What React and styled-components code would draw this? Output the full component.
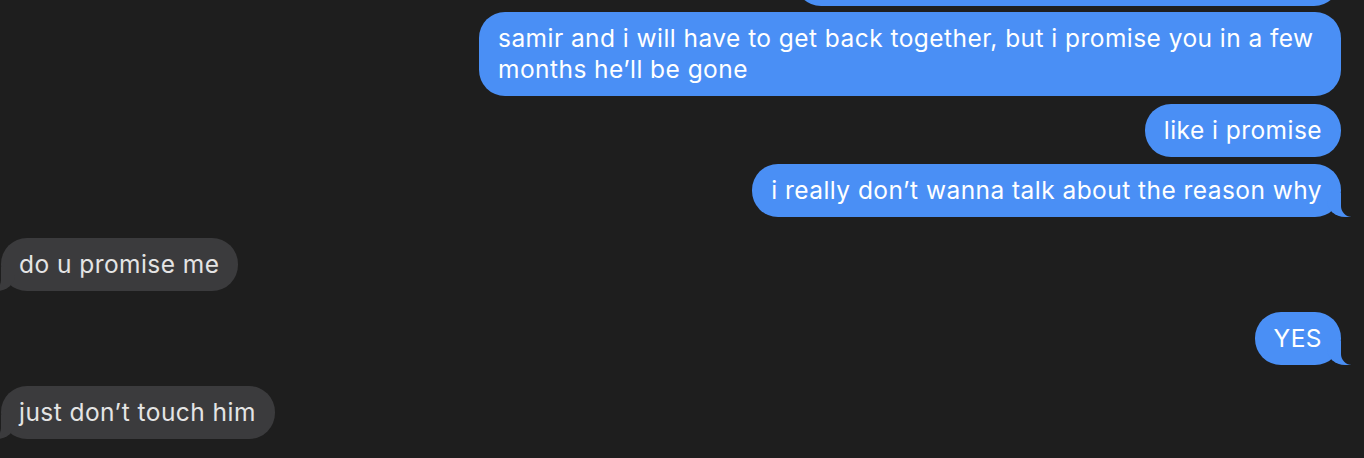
import React from "react";
import styled, { createGlobalStyle, css } from "styled-components";

const GlobalStyle = createGlobalStyle`
  html, body {
    margin: 0;
    padding: 0;
    background: #1e1e1e;
    overflow: hidden;
  }
`;

const BG = "#1e1e1e";
const BLUE = "#4a8ff5";
const GRAY = "#3b3b3d";

// ================= THREAD =================
const Thread = styled.div`
  width: 1364px;
  height: 458px;
  box-sizing: border-box;
  padding: 0 23px 0 1px;
  display: flex;
  flex-direction: column;
  overflow: hidden;
  font-family: Inter, "Noto Sans", sans-serif;
`;

// ================= BUBBLE =================
const Bubble = styled.div`
  position: relative;
  box-sizing: border-box;
  max-width: 862px;
  padding: 11px 19px 11px ${({ $sent }) => ($sent ? 19 : 18)}px;
  border-radius: 26px;
  font-size: 24.5px;
  line-height: 31px;
  letter-spacing: 0.45px;
  align-self: ${({ $sent }) => ($sent ? "flex-end" : "flex-start")};
  background: ${({ $sent }) => ($sent ? BLUE : GRAY)};
  color: ${({ $sent }) => ($sent ? "#ffffff" : "#e4e4e4")};
  margin-top: ${({ $gap }) => $gap}px;

  /* tail */
  ${({ $tail, $sent }) =>
    $tail &&
    $sent &&
    css`
      &::before {
        content: "";
        position: absolute;
        right: -10px;
        bottom: 0;
        width: 24px;
        height: 24px;
        background: ${BLUE};
        border-bottom-left-radius: 18px 16px;
      }
      &::after {
        content: "";
        position: absolute;
        right: -30px;
        bottom: 0;
        width: 30px;
        height: 26px;
        background: ${BG};
        border-bottom-left-radius: 11px;
      }
    `}

  ${({ $tail, $sent }) =>
    $tail &&
    !$sent &&
    css`
      &::before {
        content: "";
        position: absolute;
        left: -10px;
        bottom: 0;
        width: 24px;
        height: 24px;
        background: ${GRAY};
        border-bottom-right-radius: 18px 16px;
      }
      &::after {
        content: "";
        position: absolute;
        left: -30px;
        bottom: 0;
        width: 30px;
        height: 26px;
        background: ${BG};
        border-bottom-right-radius: 11px;
      }
    `}
`;

const Label = styled.span`
  position: relative;
  z-index: 1;
`;

const Cut = styled(Bubble)`
  width: 545px;
  height: 53px;
  margin-top: -47px;
  margin-right: 1px;
`;

const messages = [
  { sent: true, gap: 6, text: "samir and i will have to get back together, but i promise you in a few months he\u2019ll be gone" },
  { sent: true, gap: 8, text: "like i promise" },
  { sent: true, gap: 7, tail: true, text: "i really don\u2019t wanna talk about the reason why" },
  { sent: false, gap: 21, tail: true, text: "do u promise me" },
  { sent: true, gap: 21, tail: true, text: "YES" },
  { sent: false, gap: 21, tail: true, text: "just don\u2019t touch him" },
];

export default function App() {
  return (
    <>
      <GlobalStyle />
      <Thread>
        <Cut $sent />
        {messages.map((m, i) => (
          <Bubble key={i} $sent={m.sent} $gap={m.gap} $tail={m.tail}>
            <Label>{m.text}</Label>
          </Bubble>
        ))}
      </Thread>
    </>
  );
}
